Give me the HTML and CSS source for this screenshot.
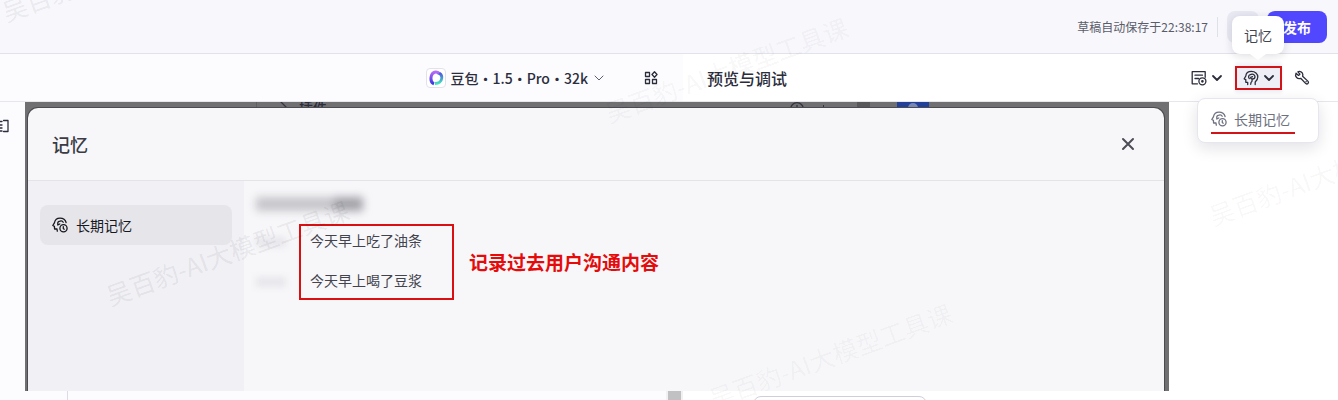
FILE: index.html
```html
<!DOCTYPE html>
<html lang="zh-CN">
<head>
<meta charset="utf-8">
<meta name="viewport" content="width=device-width, initial-scale=1">
<title>记忆</title>
<link rel="stylesheet" href="styles.css">
</head>
<body>
<svg class="sprite" aria-hidden="true">
  <symbol id="head" viewBox="0 0 16 16"><path d="M4.700 14.500v-2.200H2.800V9.600L1.200 8.800 2.800 6C3 3.200 5.300 1.300 8.500 1.300c3.500 0 6.300 2.400 6.300 5.700 0 2.300-1.100 3.600-2.600 5v2.500M9 11.300c-.9.600-1.300 1.600-1.300 3M9 11.300L9.200 9M6.300 8.500c-1.300-1.500-.7-3.500 1-3.800C9 3.500 12 4.300 12 6.700 12 8.300 10.800 9 9.200 9 8.200 9 7.600 8.300 7.700 7.300l1.800-.6"/></symbol>
  <symbol id="head-clock" viewBox="0 0 16 16"><path d="M5.300 14.200L5 12H2.600L2.400 9.300.8 8.500l1.600-2.700C3 2.900 5 1.200 8 1.200c3.100 0 5.400 1.600 6.100 4.300M5.800 8V6.300C5.700 4.900 6.700 4.200 8 4.200c1.300-.5 2.600-.1 3.200 1M5.800 8l2-1"/><circle cx="11.500" cy="11.200" r="3.600"/><path d="M11.300 9.600v1.900l.9.700"/></symbol>
  <symbol id="down" viewBox="0 0 12 12"><path d="M2 4l4 4 4-4"/></symbol>
</svg>
<div class="app">
  <header class="topbar">
    <span class="saved">草稿自动保存于22:38:17</span>
    <span class="divider"></span>
    <div class="actions">
      <button class="more" type="button" aria-label="更多"></button>
      <button class="publish" type="button">发布</button>
    </div>
  </header>

  <div class="toolbar">
    <div class="model-side">
      <button class="model" type="button">
        <span class="logo"><svg viewBox="0 0 16 16" width="16" height="16">
          <defs>
            <linearGradient id="g1" x1="0" y1="0" x2="0" y2="1"><stop offset="0" stop-color="#b569f5"/><stop offset="1" stop-color="#3a38df"/></linearGradient>
            <linearGradient id="g2" x1="0" y1="0" x2="0" y2="1"><stop offset="0" stop-color="#4b55df"/><stop offset="1" stop-color="#45e3bd"/></linearGradient>
          </defs>
          <path d="M10 2.800c2.800.7 4.200 2.800 3.700 5.700-.5 3.300-2.900 5-6.700 5" fill="none" stroke="url(#g2)" stroke-width="2.800"/>
          <path d="M11 3.500C8.500.8 4.200 2 3.300 6c-.8 3.500-.5 6.500 2.700 7.800" fill="none" stroke="url(#g1)" stroke-width="3"/>
        </svg></span>
        <span>豆包・1.5・Pro・32k</span>
        <svg class="icon thin" width="12" height="12"><use href="#down"/></svg>
      </button>
      <button class="tool" type="button" aria-label="布局"><svg class="icon" width="14" height="14" viewBox="0 0 14 14"><path d="M1.500 1.500h4v4h-4zM1.500 8.500h4v4h-4zM8.500 8.500h4v4h-4zM10.500.8L13 3.500l-2.500 2.700L8 3.500z"/></svg></button>
    </div>
    <div class="preview-side">
      <h1 class="preview-title">预览与调试</h1>
      <div class="tools">
        <button class="tool" type="button" aria-label="变量">
          <svg class="icon" width="16" height="16" viewBox="0 0 16 16"><path d="M6.500 13.800H1.200V1.700h13v5.600M4 5.200h7.500M4 8.500h3.500"/><circle cx="11.400" cy="11.300" r="3.500"/><circle cx="11.400" cy="11.300" r=".7"/></svg>
          <svg class="icon bold" width="12" height="12"><use href="#down"/></svg>
        </button>
        <div class="memory-anchor">
          <button class="tool memory" type="button" aria-label="记忆" aria-expanded="true">
            <svg class="icon" width="16" height="16"><use href="#head"/></svg>
            <svg class="icon bold" width="12" height="12"><use href="#down"/></svg>
          </button>
          <div class="tooltip" role="tooltip">记忆</div>
          <div class="menu">
            <button class="menu-item" type="button">
              <svg class="icon" width="16" height="16"><use href="#head-clock"/></svg>
              <span>长期记忆</span>
            </button>
          </div>
        </div>
        <button class="tool" type="button" aria-label="设置"><svg class="icon" width="16" height="16" viewBox="0 0 16 16"><path d="M2 3.200l2.500 2.200 1.400-1.200L3.900 1.800C6 .8 8.500 2 8.800 4.300c.1.800 0 1.300-.2 1.900l5.500 5.200c1.200 1.600-.8 3.400-2.300 2.200L6.700 8.300C3.500 9.500.5 6.500 2 3.200z"/><path d="M12 11.700h.2"/></svg></button>
      </div>
    </div>
  </div>

  <main class="workspace">
    <div class="stage">
      <aside class="rail"><svg class="icon" width="9" height="14" viewBox="0 0 9 14"><path d="M0 2.500h2M0 6h2M0 9h2M0 12h2M3.500 1.500H8v11H3.500"/></svg></aside>
      <section class="backdrop">
        <div class="behind" aria-hidden="true">
          <span class="behind-line"></span>
          <svg class="icon" width="10" height="8" viewBox="0 0 10 8"><path d="M1 0l7 7"/></svg>
          <span class="behind-text">插件</span>
          <span class="behind-right">
            <svg class="icon" width="16" height="16" viewBox="0 0 16 16"><circle cx="8" cy="7" r="6.300"/><path d="M8 3.500v3"/></svg>
            <span class="behind-tick"></span>
            <span class="behind-bar"></span>
            <span class="behind-avatar"><i></i></span>
          </span>
        </div>
        <div class="dialog" role="dialog" aria-labelledby="dialog-title">
          <div class="dialog-head">
            <h2 class="dialog-title" id="dialog-title">记忆</h2>
            <button class="close" type="button" aria-label="关闭"><svg class="icon" width="14" height="14" viewBox="0 0 14 14"><path d="M2 2l10 10M12 2L2 12"/></svg></button>
          </div>
          <div class="dialog-body">
            <nav class="side">
              <button class="side-item" type="button">
                <svg class="icon" width="16" height="16"><use href="#head-clock"/></svg>
                <span>长期记忆</span>
              </button>
            </nav>
            <div class="content">
              <div class="blurred-date"><i></i><b></b></div>
              <div class="records">
                <div class="times"><i></i><i></i></div>
                <ul class="entries">
                  <li>今天早上吃了油条</li>
                  <li>今天早上喝了豆浆</li>
                </ul>
                <strong class="note">记录过去用户沟通内容</strong>
              </div>
            </div>
          </div>
        </div>
      </section>
    </div>
    <div class="bottom">
      <div class="bottom-left"><span class="scrollbar"></span></div>
      <div class="bottom-right"><div class="box"></div></div>
    </div>
  </main>

  <div class="watermarks" aria-hidden="true">
    <span class="mark m1">吴百豹-AI大模型工具课</span>
    <span class="mark m2">吴百豹-AI大模型工具课</span>
    <span class="mark m3">吴百豹-AI大模型工具课</span>
    <span class="mark m4">吴百豹-AI大模型工具课</span>
    <span class="mark m5">吴百豹-AI大模型工具课</span>
  </div>
</div>
</body>
</html>
```
FILE: styles.css
```css
* { box-sizing: border-box; }
body {
  margin: 0;
  font-family: "Noto Sans CJK SC", "Noto Sans", sans-serif;
  font-size: 14px;
  line-height: 20px;
  color: #2b2d3b;
}
button {
  margin: 0;
  padding: 0;
  border: 0;
  background: none;
  font: inherit;
  color: inherit;
  display: flex;
  align-items: center;
}
h1, h2, ul { margin: 0; padding: 0; list-style: none; }
.sprite { display: none; }
.icon {
  flex: none;
  fill: none;
  stroke: currentColor;
  stroke-width: 1.3;
  stroke-linecap: round;
  stroke-linejoin: round;
}
.thin { stroke-width: 1; color: #5c5f70; }
.bold { stroke-width: 1.8; }

.app {
  position: relative;
  display: flex;
  flex-direction: column;
  min-height: 100vh;
  overflow: hidden;
  background: #fff;
}

.topbar {
  display: flex;
  justify-content: flex-end;
  align-items: center;
  height: 54px;
  padding-right: 11px;
  background: #f7f7fc;
  border-bottom: 1px solid #e2e2ea;
}
.saved { font-size: 12px; color: #5a5c6a; }
.divider { width: 1px; height: 20px; margin: 0 9px; background: #dfe0e8; }
.actions { display: flex; gap: 8px; }
.more { width: 32px; height: 32px; border-radius: 8px; background: #e9e9f3; }
.publish {
  height: 32px;
  padding: 0 16px;
  border-radius: 8px;
  background: #5147ff;
  color: #fff;
  font-weight: 600;
}

.toolbar {
  display: grid;
  grid-template-columns: 683fr 655fr;
  height: 48px;
  border-bottom: 1px solid #e6e6ed;
}
.model-side {
  display: flex;
  align-items: center;
  justify-content: flex-end;
  gap: 39px;
  padding-right: 25px;
  background: #fcfcff;
}
.model { gap: 5px; font-weight: 500; }
.logo {
  display: grid;
  place-items: center;
  width: 20px;
  height: 20px;
  border: 1px solid #e2e2ea;
  border-radius: 4px;
  background: #fff;
}
.preview-side {
  display: flex;
  align-items: center;
  justify-content: space-between;
  padding: 0 28px 0 24px;
}
.preview-title { font-size: 16px; font-weight: 500; line-height: 24px; }
.tools { display: flex; align-items: center; gap: 12px; }
.tool { gap: 4px; }
.memory-anchor { position: relative; }
.memory {
  height: 24px;
  padding: 0 5px 0 6px;
  border: 2px solid #d01417;
  background: #eeeef6;
  box-shadow: 0 -3px 3px #f2f2f8, 0 3px 3px #f2f2f8;
}
.tooltip {
  position: absolute;
  right: -2px;
  bottom: 36px;
  z-index: 2;
  padding: 9px 12px;
  border-radius: 8px;
  background: #fff;
  color: #42444f;
  white-space: nowrap;
  box-shadow: 0 2px 10px rgba(20, 20, 50, .14);
}
.tooltip::after {
  content: "";
  position: absolute;
  left: 18px;
  top: 100%;
  border: 8px solid transparent;
  border-top: 6px solid #fff;
  border-bottom: 0;
}
.menu {
  position: absolute;
  right: -37px;
  top: 32px;
  z-index: 2;
  width: 122px;
  padding: 8px 14px 8px 13px;
  border: 1px solid #e6e6ee;
  border-radius: 8px;
  background: #fff;
  box-shadow: 0 5px 16px rgba(20, 20, 50, .12);
}
.menu-item {
  gap: 7px;
  height: 27px;
  padding: 0 5px 0 0;
  border-bottom: 2px solid #d01417;
  color: #6e7180;
  white-space: nowrap;
}

.workspace { flex: 1; display: flex; flex-direction: column; }
.stage { flex: 1; display: flex; padding-right: 169px; }
.rail { width: 25px; padding-top: 17px; background: #fcfcff; }
.rail .icon { display: block; }
.backdrop {
  position: relative;
  flex: 1;
  display: flex;
  padding: 6px 5px 0 3px;
  background: #707073;
  overflow: hidden;
}
.behind {
  position: absolute;
  inset: 0 0 auto 0;
  display: flex;
  align-items: flex-start;
  height: 6px;
  padding-left: 231px;
  overflow: hidden;
}
.behind .icon { color: #34343f; }
.behind-line { width: 1px; height: 6px; margin-right: 23px; background: #5e5e63; }
.behind-text { margin: -5px 0 0 9px; font-weight: 500; }
.behind-right {
  display: flex;
  align-items: flex-start;
  margin-left: auto;
  padding-right: 240px;
}
.behind-tick { width: 1px; height: 3px; margin: 3px 33px 0 18px; background: #34343f; }
.behind-bar { width: 13px; height: 6px; margin-right: 27px; background: #58585a; }
.behind-avatar { display: flex; justify-content: center; width: 32px; height: 6px; background: #22409a; }
.behind-avatar i { width: 10px; height: 10px; margin-top: 1px; border-radius: 50%; background: #7888b5; }
.dialog {
  position: relative;
  flex: 1;
  display: flex;
  flex-direction: column;
  border-radius: 10px 10px 0 0;
  background: #f7f7fa;
  box-shadow: 0 0 0 1px #4b4b50;
}
.dialog-head {
  display: flex;
  align-items: center;
  justify-content: space-between;
  height: 73px;
  padding: 0 29px 0 24px;
  border-bottom: 1px solid #e3e3e8;
}
.dialog-title { font-size: 18px; line-height: 26px; font-weight: 500; color: #3a3b45; }
.close .icon { stroke-width: 2; color: #4c4d57; }
.dialog-body { flex: 1; display: flex; }
.side { width: 216px; padding: 24px 12px; background: #f0f0f5; }
.side-item {
  gap: 8px;
  width: 100%;
  height: 40px;
  padding: 0 12px;
  border-radius: 8px;
  background: #e5e5ea;
  color: #17181f;
}
.content { flex: 1; padding: 14px 12px; }
.blurred-date { display: flex; align-items: center; height: 18px; filter: blur(4px); }
.blurred-date i { width: 78px; height: 14px; background: #c6c6ca; }
.blurred-date b { width: 29px; height: 14px; background: #a2a2a8; }
.records { display: flex; align-items: center; margin-top: 11px; }
.times { display: flex; flex-direction: column; gap: 30px; width: 43px; }
.times i { width: 30px; height: 10px; background: #e7e7eb; filter: blur(3px); }
.entries {
  display: flex;
  flex-direction: column;
  gap: 20px;
  width: 155px;
  padding: 4px 9px 8px;
  border: 2px solid #d90f12;
  color: #42434c;
}
.note { margin-left: 15px; font-size: 19px; line-height: 28px; font-weight: 700; color: #e60b0b; }

.bottom { display: grid; grid-template-columns: 683fr 655fr; height: 9px; }
.bottom-left {
  display: flex;
  justify-content: flex-end;
  margin-left: 67px;
  border-left: 1px solid #dcdce4;
  background: #fcfcff;
  box-shadow: -67px 0 #fcfcff;
}
.scrollbar { width: 17px; border: solid #f1f1f2; border-width: 0 2px; background: #c1c1c3; }
.bottom-right { padding: 5px 0 0 70px; overflow: hidden; }
.box { width: 174px; height: 32px; border: 1px solid #cfcfdb; border-radius: 8px; background: #fff; }

.watermarks { position: absolute; inset: 0; z-index: 1; overflow: hidden; pointer-events: none; }
.mark {
  position: absolute;
  font-size: 25px;
  line-height: 36px;
  color: rgba(40, 40, 50, .08);
  white-space: nowrap;
  transform: translate(-50%, -50%) rotate(-20deg);
}
.m1 { left: 227px; top: 252px; }
.m2 { left: 726px; top: 69px; color: rgba(40, 40, 50, .05); }
.m3 { left: 830px; top: 355px; color: rgba(40, 40, 50, .04); }
.m4 { left: 1330px; top: 172px; color: rgba(40, 40, 50, .04); }
.m5 { left: 123px; top: -32px; }
```
